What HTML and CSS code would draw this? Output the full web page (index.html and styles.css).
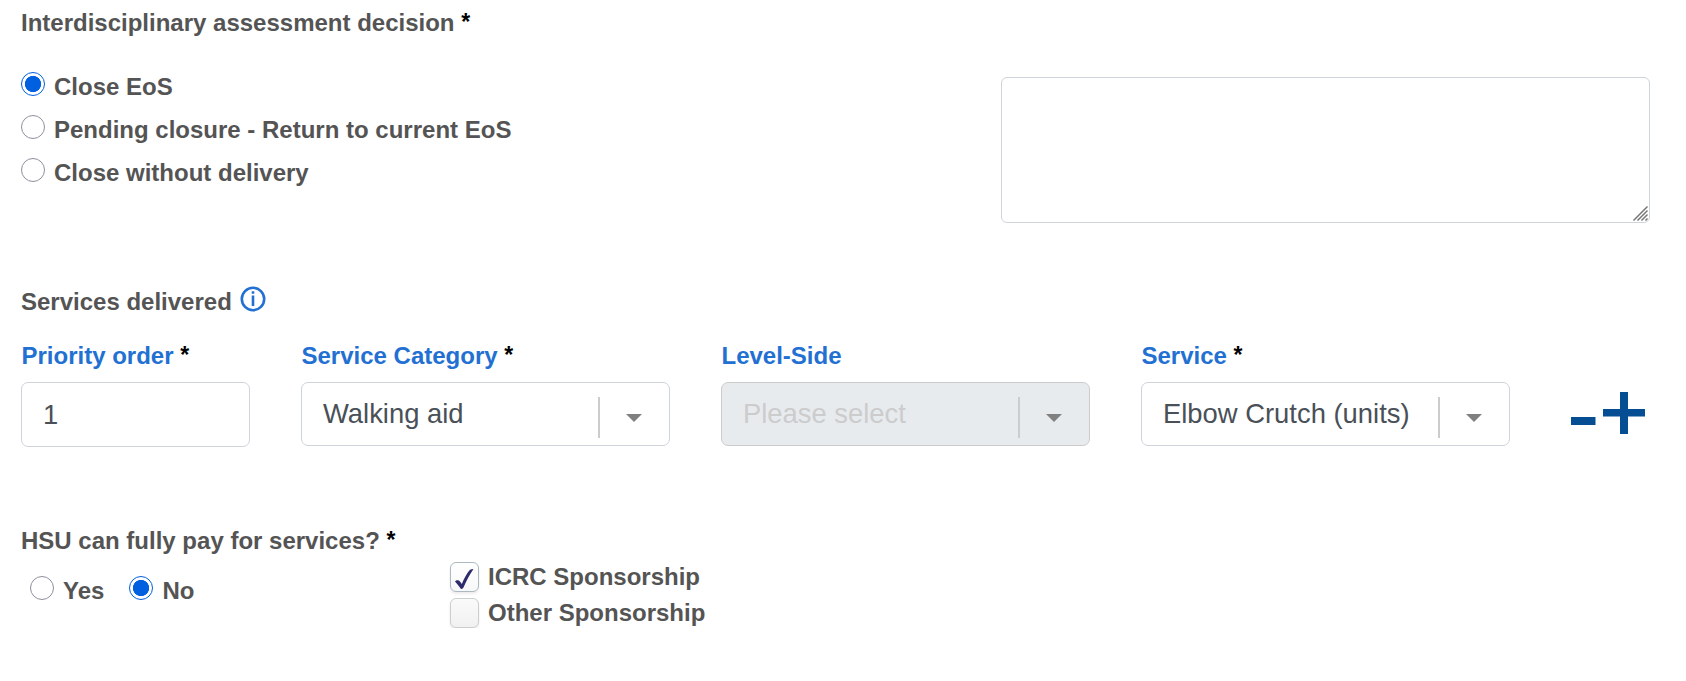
FILE: index.html
```html
<!DOCTYPE html>
<html lang="en">
<head>
<meta charset="utf-8">
<title>Assessment decision</title>
<link rel="stylesheet" href="styles.css">
</head>
<body>
<form class="form">
  <section class="decision">
    <div class="decision-main">
      <h2 class="title">Interdisciplinary assessment decision <span class="req">*</span></h2>
      <div class="radio-list">
        <label class="option"><input class="radio" type="radio" name="decision" checked><span class="option-text">Close EoS</span></label>
        <label class="option"><input class="radio" type="radio" name="decision"><span class="option-text">Pending closure - Return to current EoS</span></label>
        <label class="option"><input class="radio" type="radio" name="decision"><span class="option-text">Close without delivery</span></label>
      </div>
    </div>
    <div class="comment">
      <textarea class="comment-input"></textarea>
      <svg class="grip" width="15" height="15" viewBox="0 0 15 15"><path d="M.5 14.500l14-14M4.500 14.500l10-10M8.500 14.500l6-6M12.500 14.500l2-2"/></svg>
    </div>
  </section>

  <section class="services">
    <h2 class="title services-title">Services delivered
      <svg class="info" width="26" height="26" viewBox="0 0 26 26"><circle cx="13" cy="13" r="11.200"/><path d="M13 9.500v10.500M13 5.200v2.600"/></svg>
    </h2>
    <div class="service-row">
      <div class="field">
        <label class="label">Priority order <span class="req">*</span></label>
        <div class="control control-number">1</div>
      </div>
      <div class="field">
        <label class="label">Service Category <span class="req">*</span></label>
        <div class="control"><span class="value">Walking aid</span><span class="divider"></span><svg class="caret" width="16" height="8" viewBox="0 0 16 8"><path d="M0 0h16L8 8z"/></svg></div>
      </div>
      <div class="field">
        <label class="label">Level-Side</label>
        <div class="control control-disabled"><span class="value">Please select</span><span class="divider"></span><svg class="caret" width="16" height="8" viewBox="0 0 16 8"><path d="M0 0h16L8 8z"/></svg></div>
      </div>
      <div class="field">
        <label class="label">Service <span class="req">*</span></label>
        <div class="control"><span class="value">Elbow Crutch (units)</span><span class="divider"></span><svg class="caret" width="16" height="8" viewBox="0 0 16 8"><path d="M0 0h16L8 8z"/></svg></div>
      </div>
      <svg class="row-actions" width="76" height="42" viewBox="0 0 76 42"><path d="M0 25h24.500v8H0zM32 17h42v7.500h-42zM49 0h8v42h-8z"/></svg>
    </div>
  </section>

  <section class="payment">
    <div class="pay">
      <h2 class="title">HSU can fully pay for services? <span class="req">*</span></h2>
      <div class="pay-options">
        <label class="option"><input class="radio" type="radio" name="pay"><span class="option-text">Yes</span></label>
        <label class="option"><input class="radio" type="radio" name="pay" checked><span class="option-text">No</span></label>
      </div>
    </div>
    <div class="sponsors">
      <label class="sponsor"><span class="box box-on"><svg class="tick" width="19" height="20" viewBox="0 0 19 20"><path d="M0 12.500C1 10.800 3.800 10.800 4.800 12.200L6.800 15C9.200 9.500 12 4 15 .8Q16.500 0 18.500 0C14.500 6 11.200 12 8.500 18.500Q7.500 20 6 20C4 17 2 14.500 0 12.500z"/></svg></span><span class="sponsor-text">ICRC Sponsorship</span></label>
      <label class="sponsor"><span class="box"></span><span class="sponsor-text">Other Sponsorship</span></label>
    </div>
  </section>
</form>
</body>
</html>
```
FILE: styles.css
```css
* { box-sizing: border-box; }

body {
  margin: 0;
  background: #fff;
  color: #545454;
  font: bold 24px/28px "Liberation Sans", Arial, sans-serif;
}

.form { padding: 9px 36px 0 21px; }
.title { margin: 0; font-size: 24px; line-height: 28px; }

.req {
  color: #000;
  font-size: 23px;
  line-height: 1;
  vertical-align: 1px;
}

.decision {
  display: flex;
  justify-content: space-between;
  height: 278px;
}

.radio-list {
  display: flex;
  flex-direction: column;
  gap: 15px;
  padding-top: 35px;
}

.option {
  display: flex;
  align-items: flex-start;
  gap: 9px;
  height: 28px;
}

.option-text { padding-top: 1px; }

.radio {
  appearance: none;
  width: 24px;
  height: 24px;
  margin: 0;
  border: 1px solid #8f8f9d;
  border-radius: 50%;
  background: #fff;
}

.radio:checked {
  border-color: #0060df;
  background: radial-gradient(circle, #0060df 7.800px, #fff 8.400px);
}

.comment {
  position: relative;
  width: 649px;
  height: 146px;
  margin-top: 68px;
}

.comment-input {
  display: block;
  width: 100%;
  height: 100%;
  border: 1px solid #ced4da;
  border-radius: 6px;
  background: #fff;
  resize: none;
}

.grip {
  position: absolute;
  right: 2px;
  bottom: 2px;
  stroke: #777;
  stroke-width: 1.5;
}

.services-title {
  display: flex;
  gap: 8px;
  padding-top: 1px;
}

.info {
  margin-top: -2px;
  fill: none;
  stroke: #2270d2;
  stroke-width: 2.6;
}

.service-row {
  display: grid;
  grid-template-columns: 229px 369px 369px 369px 76px;
  column-gap: 51px;
  margin-top: 26px;
}

.label {
  display: block;
  height: 40px;
  padding-left: .5px;
  color: #2270d2;
}

.control {
  display: flex;
  align-items: center;
  width: 100%;
  height: 64px;
  padding: 0 27px 0 21px;
  border: 1px solid #ced4da;
  border-radius: 7px;
  background: #fff;
  color: #495057;
  font-size: 27.4px;
  font-weight: normal;
  line-height: 32px;
}

.control-number { height: 65px; }

.control-disabled {
  border-color: #ccc;
  background: #e7ebee;
  color: #ccc;
}

.value {
  flex: 1;
  white-space: nowrap;
}

.divider {
  width: 2px;
  height: 41px;
  margin-top: 7px;
  background: #ccc;
}

.caret {
  margin: 8px 0 0 26px;
  fill: #808080;
}

.row-actions {
  margin: 50px 0 0 10px;
  fill: #054e93;
}

.payment {
  display: flex;
  margin-top: 78px;
}

.pay {
  width: 429px;
  padding-top: 2px;
}

.pay-options {
  display: flex;
  gap: 25px;
  padding: 21px 0 0 9px;
}

.sponsors {
  display: flex;
  flex-direction: column;
  gap: 6px;
  padding-top: 37px;
}

.sponsor {
  display: flex;
  gap: 9px;
  height: 30px;
}

.sponsor-text { padding-top: 1px; }

.box {
  display: flex;
  align-items: center;
  justify-content: center;
  width: 29px;
  height: 30px;
  border: 1px solid #cacece;
  border-radius: 6px;
  background: linear-gradient(#fafafa, #f1f1f1);
  box-shadow: 0 2px 3px rgba(0, 0, 0, .08);
}

.box-on {
  border-color: #adb8c0;
  background: linear-gradient(#fff, #f7f8f9);
}

.tick {
  margin-top: 3px;
  fill: #2d2b6b;
}
```
